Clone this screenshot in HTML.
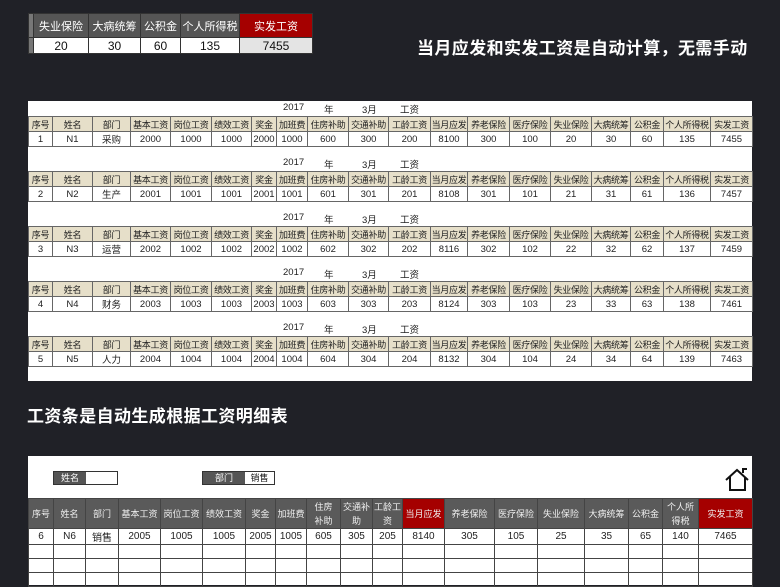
<!DOCTYPE html>
<html><head><meta charset="utf-8"><style>
*{margin:0;padding:0;box-sizing:border-box}
body{width:780px;height:585px;overflow:hidden;background:#202127;font-family:"Liberation Sans","Noto Sans CJK SC",sans-serif;position:relative}
.abs{position:absolute}
table{border-collapse:collapse;table-layout:fixed;position:absolute}
td{text-align:center;white-space:nowrap;overflow:hidden;padding:0}
.top td{border:1px solid #333;font-size:11px;height:24px;color:#fff;background:#555}
.top tr.d td{background:#fff;color:#111;height:16px;font-size:12px}
.title{color:#fff;font-size:17px;font-weight:bold;letter-spacing:0.4px}
.panel{background:#fff}
.m td{border:1px solid #666;font-size:9px;color:#222;height:15px;letter-spacing:-0.3px}
.m tr.h td{background:#e6dfc9;height:15px}
.m tr.d td{height:14px;font-size:9.5px;letter-spacing:0}
.yr{position:absolute;font-size:9.5px;color:#222}
.b td{border:1px solid #444;font-size:9.5px;color:#222;height:14px}
.b tr.h td{background:#5a5a5a;color:#f0f0f0;height:30px;line-height:14px;font-size:9px}
.b tr.h td.r{background:#a50000}
.b tr.d td{height:15px;font-size:10px}
</style></head><body>

<table class="top" style="left:28px;top:13px;width:284px">
<colgroup><col style="width:5px"><col style="width:55px"><col style="width:52px"><col style="width:40px"><col style="width:59px"><col style="width:73px"></colgroup>
<tr><td style="background:#777"></td><td>失业保险</td><td>大病统筹</td><td>公积金</td><td>个人所得税</td><td style="background:#a50000">实发工资</td></tr>
<tr class="d"><td style="background:#777"></td><td>20</td><td>30</td><td>60</td><td>135</td><td style="background:#e4e4e4">7455</td></tr>
</table>

<div class="abs title" style="left:417px;top:34px">当月应发和实发工资是自动计算，无需手动</div>

<div class="abs panel" style="left:28px;top:101px;width:724px;height:280px"></div>

<div class="yr" style="left:283px;top:102px">2017</div><div class="yr" style="left:324px;top:102px">年</div><div class="yr" style="left:362px;top:102px">3月</div><div class="yr" style="left:400px;top:102px">工资</div>
<div class="yr" style="left:283px;top:157px">2017</div><div class="yr" style="left:324px;top:157px">年</div><div class="yr" style="left:362px;top:157px">3月</div><div class="yr" style="left:400px;top:157px">工资</div>
<div class="yr" style="left:283px;top:212px">2017</div><div class="yr" style="left:324px;top:212px">年</div><div class="yr" style="left:362px;top:212px">3月</div><div class="yr" style="left:400px;top:212px">工资</div>
<div class="yr" style="left:283px;top:267px">2017</div><div class="yr" style="left:324px;top:267px">年</div><div class="yr" style="left:362px;top:267px">3月</div><div class="yr" style="left:400px;top:267px">工资</div>
<div class="yr" style="left:283px;top:322px">2017</div><div class="yr" style="left:324px;top:322px">年</div><div class="yr" style="left:362px;top:322px">3月</div><div class="yr" style="left:400px;top:322px">工资</div>

<table class="m" style="left:28px;top:116px;width:724px">
<colgroup><col style="width:24px"><col style="width:40px"><col style="width:38px"><col style="width:40px"><col style="width:41px"><col style="width:40px"><col style="width:25px"><col style="width:31px"><col style="width:41px"><col style="width:40px"><col style="width:42px"><col style="width:37px"><col style="width:42px"><col style="width:41px"><col style="width:41px"><col style="width:39px"><col style="width:33px"><col style="width:47px"><col style="width:42px"></colgroup>
<tr class="h"><td>序号</td><td>姓名</td><td>部门</td><td>基本工资</td><td>岗位工资</td><td>绩效工资</td><td>奖金</td><td>加班费</td><td>住房补助</td><td>交通补助</td><td>工龄工资</td><td>当月应发</td><td>养老保险</td><td>医疗保险</td><td>失业保险</td><td>大病统筹</td><td>公积金</td><td>个人所得税</td><td>实发工资</td></tr>
<tr class="d"><td>1</td><td>N1</td><td>采购</td><td>2000</td><td>1000</td><td>1000</td><td>2000</td><td>1000</td><td>600</td><td>300</td><td>200</td><td>8100</td><td>300</td><td>100</td><td>20</td><td>30</td><td>60</td><td>135</td><td>7455</td></tr>
</table>
<table class="m" style="left:28px;top:171px;width:724px">
<colgroup><col style="width:24px"><col style="width:40px"><col style="width:38px"><col style="width:40px"><col style="width:41px"><col style="width:40px"><col style="width:25px"><col style="width:31px"><col style="width:41px"><col style="width:40px"><col style="width:42px"><col style="width:37px"><col style="width:42px"><col style="width:41px"><col style="width:41px"><col style="width:39px"><col style="width:33px"><col style="width:47px"><col style="width:42px"></colgroup>
<tr class="h"><td>序号</td><td>姓名</td><td>部门</td><td>基本工资</td><td>岗位工资</td><td>绩效工资</td><td>奖金</td><td>加班费</td><td>住房补助</td><td>交通补助</td><td>工龄工资</td><td>当月应发</td><td>养老保险</td><td>医疗保险</td><td>失业保险</td><td>大病统筹</td><td>公积金</td><td>个人所得税</td><td>实发工资</td></tr>
<tr class="d"><td>2</td><td>N2</td><td>生产</td><td>2001</td><td>1001</td><td>1001</td><td>2001</td><td>1001</td><td>601</td><td>301</td><td>201</td><td>8108</td><td>301</td><td>101</td><td>21</td><td>31</td><td>61</td><td>136</td><td>7457</td></tr>
</table>
<table class="m" style="left:28px;top:226px;width:724px">
<colgroup><col style="width:24px"><col style="width:40px"><col style="width:38px"><col style="width:40px"><col style="width:41px"><col style="width:40px"><col style="width:25px"><col style="width:31px"><col style="width:41px"><col style="width:40px"><col style="width:42px"><col style="width:37px"><col style="width:42px"><col style="width:41px"><col style="width:41px"><col style="width:39px"><col style="width:33px"><col style="width:47px"><col style="width:42px"></colgroup>
<tr class="h"><td>序号</td><td>姓名</td><td>部门</td><td>基本工资</td><td>岗位工资</td><td>绩效工资</td><td>奖金</td><td>加班费</td><td>住房补助</td><td>交通补助</td><td>工龄工资</td><td>当月应发</td><td>养老保险</td><td>医疗保险</td><td>失业保险</td><td>大病统筹</td><td>公积金</td><td>个人所得税</td><td>实发工资</td></tr>
<tr class="d"><td>3</td><td>N3</td><td>运营</td><td>2002</td><td>1002</td><td>1002</td><td>2002</td><td>1002</td><td>602</td><td>302</td><td>202</td><td>8116</td><td>302</td><td>102</td><td>22</td><td>32</td><td>62</td><td>137</td><td>7459</td></tr>
</table>
<table class="m" style="left:28px;top:281px;width:724px">
<colgroup><col style="width:24px"><col style="width:40px"><col style="width:38px"><col style="width:40px"><col style="width:41px"><col style="width:40px"><col style="width:25px"><col style="width:31px"><col style="width:41px"><col style="width:40px"><col style="width:42px"><col style="width:37px"><col style="width:42px"><col style="width:41px"><col style="width:41px"><col style="width:39px"><col style="width:33px"><col style="width:47px"><col style="width:42px"></colgroup>
<tr class="h"><td>序号</td><td>姓名</td><td>部门</td><td>基本工资</td><td>岗位工资</td><td>绩效工资</td><td>奖金</td><td>加班费</td><td>住房补助</td><td>交通补助</td><td>工龄工资</td><td>当月应发</td><td>养老保险</td><td>医疗保险</td><td>失业保险</td><td>大病统筹</td><td>公积金</td><td>个人所得税</td><td>实发工资</td></tr>
<tr class="d"><td>4</td><td>N4</td><td>财务</td><td>2003</td><td>1003</td><td>1003</td><td>2003</td><td>1003</td><td>603</td><td>303</td><td>203</td><td>8124</td><td>303</td><td>103</td><td>23</td><td>33</td><td>63</td><td>138</td><td>7461</td></tr>
</table>
<table class="m" style="left:28px;top:336px;width:724px">
<colgroup><col style="width:24px"><col style="width:40px"><col style="width:38px"><col style="width:40px"><col style="width:41px"><col style="width:40px"><col style="width:25px"><col style="width:31px"><col style="width:41px"><col style="width:40px"><col style="width:42px"><col style="width:37px"><col style="width:42px"><col style="width:41px"><col style="width:41px"><col style="width:39px"><col style="width:33px"><col style="width:47px"><col style="width:42px"></colgroup>
<tr class="h"><td>序号</td><td>姓名</td><td>部门</td><td>基本工资</td><td>岗位工资</td><td>绩效工资</td><td>奖金</td><td>加班费</td><td>住房补助</td><td>交通补助</td><td>工龄工资</td><td>当月应发</td><td>养老保险</td><td>医疗保险</td><td>失业保险</td><td>大病统筹</td><td>公积金</td><td>个人所得税</td><td>实发工资</td></tr>
<tr class="d"><td>5</td><td>N5</td><td>人力</td><td>2004</td><td>1004</td><td>1004</td><td>2004</td><td>1004</td><td>604</td><td>304</td><td>204</td><td>8132</td><td>304</td><td>104</td><td>24</td><td>34</td><td>64</td><td>139</td><td>7463</td></tr>
</table>

<div class="abs title" style="left:27px;top:402px">工资条是自动生成根据工资明细表</div>

<div class="abs panel" style="left:28px;top:456px;width:724px;height:129px"></div>
<div class="abs" style="left:53px;top:471px;width:65px;height:14px;border:1px solid #333;background:#fff"></div>
<div class="abs" style="left:54px;top:472px;width:32px;height:12px;background:#555;color:#fff;font-size:9px;text-align:center;line-height:12px">姓名</div>
<div class="abs" style="left:202px;top:471px;width:73px;height:14px;border:1px solid #333;background:#fff"></div>
<div class="abs" style="left:203px;top:472px;width:42px;height:12px;background:#555;color:#fff;font-size:9px;text-align:center;line-height:12px">部门</div>
<div class="abs" style="left:245px;top:472px;width:29px;height:12px;color:#111;font-size:9px;text-align:center;line-height:12px">销售</div>
<svg class="abs" style="left:724px;top:467px" width="28" height="26" viewBox="0 0 28 26"><path d="M2 13 L13 3 L24 13 M6 10 V23 H21 V10 M19 6 V2 H23" fill="none" stroke="#111" stroke-width="2"/></svg>

<table class="b" style="left:28px;top:498px;width:724px">
<colgroup><col style="width:25px"><col style="width:32px"><col style="width:33px"><col style="width:42px"><col style="width:42px"><col style="width:43px"><col style="width:30px"><col style="width:31px"><col style="width:34px"><col style="width:32px"><col style="width:30px"><col style="width:42px"><col style="width:50px"><col style="width:43px"><col style="width:47px"><col style="width:44px"><col style="width:34px"><col style="width:36px"><col style="width:54px"></colgroup>
<tr class="h"><td>序号</td><td>姓名</td><td>部门</td><td>基本工资</td><td>岗位工资</td><td>绩效工资</td><td>奖金</td><td>加班费</td><td>住房<br>补助</td><td>交通补<br>助</td><td>工龄工<br>资</td><td class="r">当月应发</td><td>养老保险</td><td>医疗保险</td><td>失业保险</td><td>大病统筹</td><td>公积金</td><td>个人所<br>得税</td><td class="r">实发工资</td></tr>
<tr class="d"><td>6</td><td>N6</td><td>销售</td><td>2005</td><td>1005</td><td>1005</td><td>2005</td><td>1005</td><td>605</td><td>305</td><td>205</td><td>8140</td><td>305</td><td>105</td><td>25</td><td>35</td><td>65</td><td>140</td><td>7465</td></tr>
<tr><td></td><td></td><td></td><td></td><td></td><td></td><td></td><td></td><td></td><td></td><td></td><td></td><td></td><td></td><td></td><td></td><td></td><td></td><td></td></tr>
<tr><td></td><td></td><td></td><td></td><td></td><td></td><td></td><td></td><td></td><td></td><td></td><td></td><td></td><td></td><td></td><td></td><td></td><td></td><td></td></tr>
<tr><td></td><td></td><td></td><td></td><td></td><td></td><td></td><td></td><td></td><td></td><td></td><td></td><td></td><td></td><td></td><td></td><td></td><td></td><td></td></tr>
</table>
</body></html>
